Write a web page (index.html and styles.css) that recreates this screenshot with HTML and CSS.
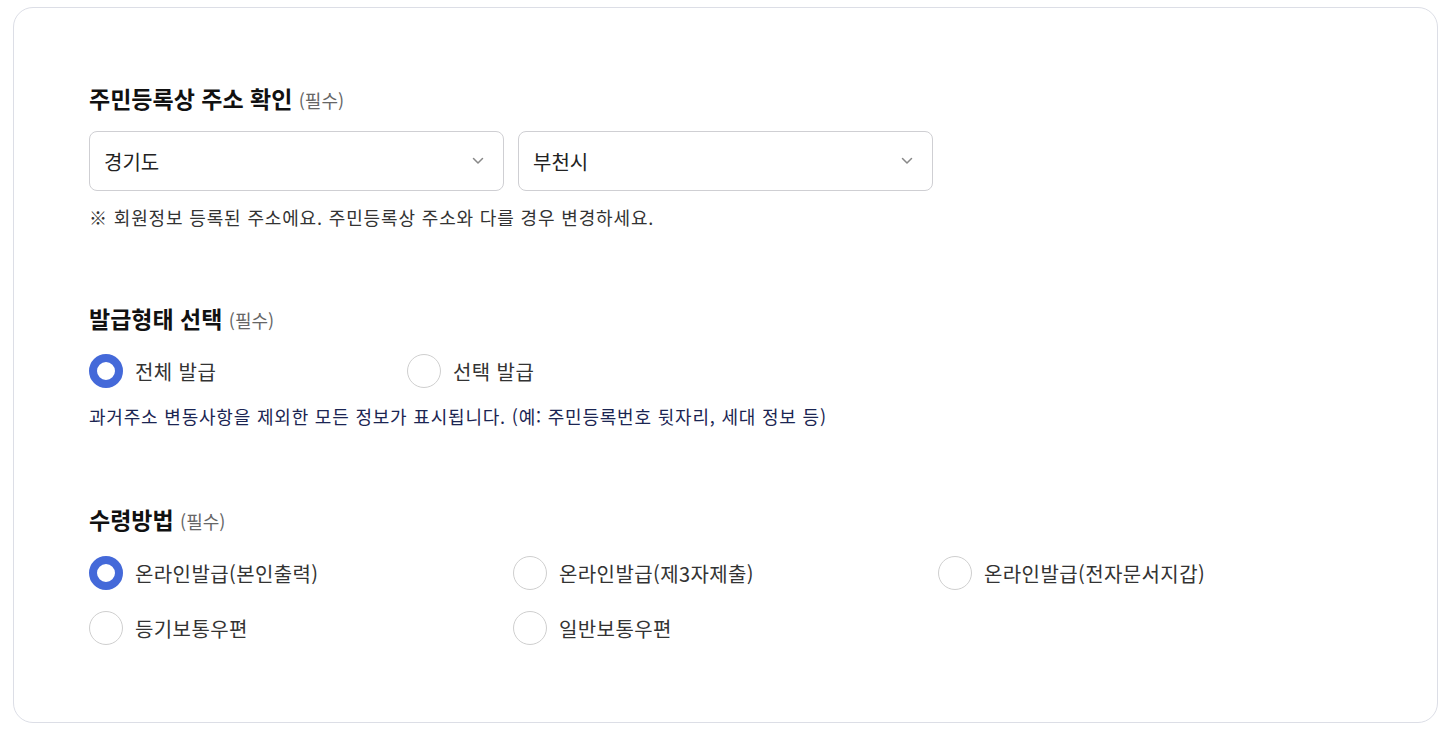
FILE: index.html
```html
<!DOCTYPE html>
<html lang="ko">
<head>
<meta charset="utf-8">
<link rel="stylesheet" href="styles.css">
</head>
<body>
<div class="card">
  <section class="section">
    <h2 class="title">주민등록상 주소 확인 <span class="req">(필수)</span></h2>
    <div class="selects">
      <div class="select"><span>경기도</span>
        <svg class="chev" width="12" height="8" viewBox="0 0 12 8"><path d="M1.5 1.5 L6 6 L10.5 1.5" fill="none" stroke="#888" stroke-width="1.5" stroke-linecap="round" stroke-linejoin="round"/></svg>
      </div>
      <div class="select"><span>부천시</span>
        <svg class="chev" width="12" height="8" viewBox="0 0 12 8"><path d="M1.5 1.5 L6 6 L10.5 1.5" fill="none" stroke="#888" stroke-width="1.5" stroke-linecap="round" stroke-linejoin="round"/></svg>
      </div>
    </div>
    <p class="note">※ 회원정보 등록된 주소에요. 주민등록상 주소와 다를 경우 변경하세요.</p>
  </section>

  <section class="section gap-top">
    <h2 class="title">발급형태 선택 <span class="req">(필수)</span></h2>
    <div class="radios type">
      <label class="radio"><span class="dot on"></span>전체 발급</label>
      <label class="radio"><span class="dot"></span>선택 발급</label>
    </div>
    <p class="info">과거주소 변동사항을 제외한 모든 정보가 표시됩니다. (예: 주민등록번호 뒷자리, 세대 정보 등)</p>
  </section>

  <section class="section gap-top2">
    <h2 class="title">수령방법 <span class="req">(필수)</span></h2>
    <div class="radios recv">
      <label class="radio"><span class="dot on"></span>온라인발급(본인출력)</label>
      <label class="radio"><span class="dot"></span>온라인발급(제3자제출)</label>
      <label class="radio"><span class="dot"></span>온라인발급(전자문서지갑)</label>
      <label class="radio"><span class="dot"></span>등기보통우편</label>
      <label class="radio"><span class="dot"></span>일반보통우편</label>
    </div>
  </section>
</div>
</body>
</html>
```

FILE: styles.css
```css
* { box-sizing: border-box; }
html, body { margin: 0; background: #fff; }
body {
  padding: 7px 17px 0 13px;
  font-family: "Noto Sans CJK KR", "Noto Sans", sans-serif;
  color: #222;
}
.card {
  border: 1px solid #dcdee6;
  border-radius: 20px;
  height: 716px;
  padding: 75px 76px 0 75px;
}
.title {
  margin: 0;
  font-size: 23px;
  line-height: 30px;
  font-weight: 700;
  color: #111;
  letter-spacing: 0;
}
.req {
  font-size: 18px;
  font-weight: 400;
  color: #666;
}
.selects {
  display: flex;
  gap: 14px;
  margin-top: 16px;
}
.select {
  width: 415px;
  height: 60px;
  border: 1px solid #cfcfd3;
  border-radius: 8px;
  display: flex;
  align-items: center;
  justify-content: space-between;
  padding: 0 19px 0 14px;
  font-size: 20px;
  color: #222;
}
.chev { display: block; }
.note {
  margin: 14px 0 0;
  font-size: 18px;
  line-height: 24px;
  color: #333;
  letter-spacing: 0.85px;
}
.gap-top { margin-top: 74px; }
.gap-top2 { margin-top: 76px; }
.radios {
  display: grid;
  row-gap: 21px;
  margin-top: 19px;
}
.radios.type { grid-template-columns: 318px 318px; }
.radios.recv { grid-template-columns: 424px 425px 425px; margin-top: 20px; }
.radio {
  display: flex;
  align-items: center;
  gap: 12px;
  height: 34px;
  font-size: 20px;
  color: #333;
  letter-spacing: 0.4px;
}
.dot {
  width: 34px;
  height: 34px;
  border-radius: 50%;
  border: 1px solid #cfcfcf;
  background: #fff;
  flex: none;
}
.dot.on {
  border: 8px solid #4469d9;
}
.info {
  margin: 16px 0 0;
  font-size: 18px;
  line-height: 24px;
  color: #1b2552;
  letter-spacing: 0.8px;
}
```
